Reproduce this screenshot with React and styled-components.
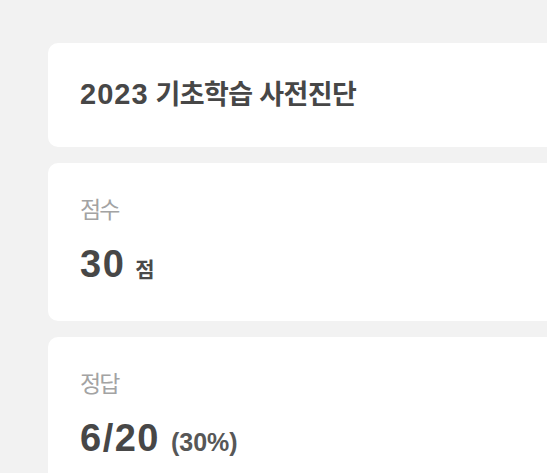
import React from "react";
import styled, { createGlobalStyle } from "styled-components";

const GlobalStyle = createGlobalStyle`
  html, body {
    margin: 0;
    padding: 0;
    background: #f2f2f2;
    overflow: hidden;
  }
  body {
    font-family: "Liberation Sans", "Noto Sans CJK KR", sans-serif;
    color: #474747;
  }
`;

const Page = styled.main`
  display: flex;
  flex-direction: column;
  gap: 16px;
  padding: 43px 0 0 48px;
  width: 560px;
`;

const Card = styled.section`
  background: #ffffff;
  border-radius: 10px;
  padding: ${(p) => (p.$compact ? "0 32px" : "33px 32px 34px")};
  height: ${(p) => (p.$compact ? "104px" : "auto")};
  display: flex;
  flex-direction: column;
  justify-content: center;
  box-sizing: border-box;
`;

const Title = styled.h1`
  margin: 0;
  font-size: 27px;
  font-weight: 700;
  letter-spacing: -0.6px;
  line-height: 34px;
  color: #474747;
`;

const Year = styled.span`
  font-size: 29px;
  letter-spacing: 1px;
  line-height: 1;
`;

const Label = styled.div`
  font-size: 23px;
  line-height: 28px;
  letter-spacing: -2px;
  color: #a3a3a3;
  font-weight: 400;
`;

const Value = styled.div`
  margin-top: 18px;
  font-size: 37px;
  font-weight: 700;
  line-height: 44px;
  white-space: nowrap;
`;

const Big = styled.span`
  font-size: 38px;
  letter-spacing: 1.5px;
  color: #474747;
`;

const Unit = styled.span`
  margin-left: ${(p) => p.$gap || "10px"};
  font-size: ${(p) => p.$size || "21px"};
  letter-spacing: 0;
  line-height: 1;
  color: ${(p) => p.$color || "#4a4a4a"};
`;

export default function App() {
  return (
    <>
      <GlobalStyle />
      <Page>
        <Card $compact>
          <Title>
            <Year>2023</Year> 기초학습 사전진단
          </Title>
        </Card>
        <Card>
          <Label>점수</Label>
          <Value>
            <Big>30</Big>
            <Unit>점</Unit>
          </Value>
        </Card>
        <Card>
          <Label>정답</Label>
          <Value>
            <Big>6/20</Big>
            <Unit $size="25px" $gap="11px" $color="#575757">(30%)</Unit>
          </Value>
        </Card>
      </Page>
    </>
  );
}
